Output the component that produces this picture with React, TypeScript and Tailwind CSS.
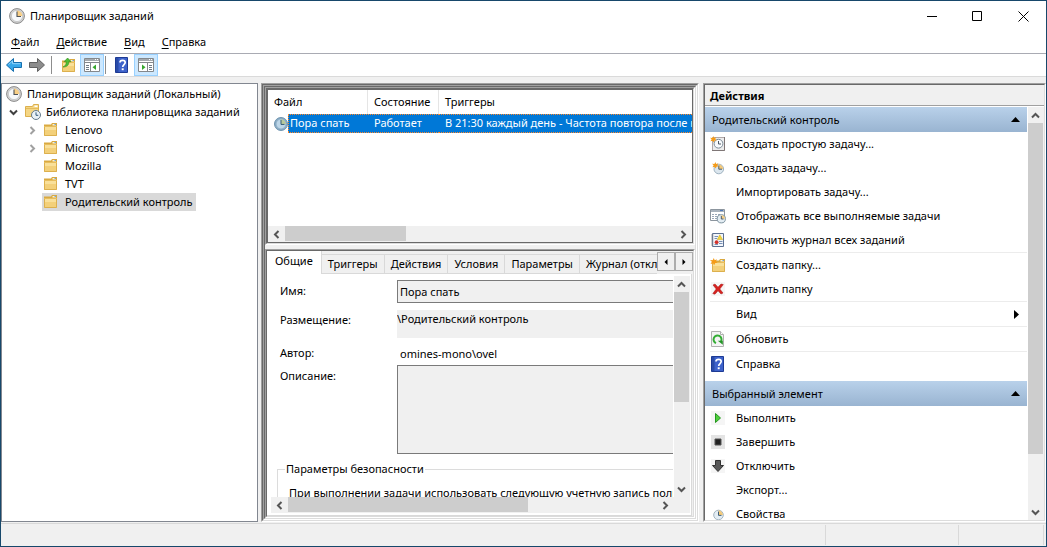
import { useState } from 'react';
import type { ReactNode } from 'react';
import clsx from 'clsx';

/* ---------- icons ---------- */

function ClockIcon({ size = 16, tone = 'gold' }: { size?: number; tone?: 'gold' | 'blue' }) {
  const blue = tone === 'blue';
  return (
    <svg width={size} height={size} viewBox="0 0 16 16" className="shrink-0" aria-hidden="true">
      <circle cx="8" cy="8" r="7.4" fill={blue ? '#8fb0c8' : '#d4d4d4'} stroke={blue ? '#5d86a5' : '#8a8a8a'} strokeWidth="1" />
      <circle cx="8" cy="8" r="5.6" fill={blue ? '#bdd6e8' : '#f6f8fa'} stroke={blue ? '#7da0ba' : '#b5b5b5'} strokeWidth="0.6" />
      <path d="M8 8V2.6A5.4 5.4 0 0 1 13.4 8Z" fill={blue ? '#b9c99a' : '#f8cf86'} />
      <path d="M8 3.4V8.5H12" fill="none" stroke={blue ? '#2f5876' : '#4e5358'} strokeWidth="1.1" />
    </svg>
  );
}

function FolderShape() {
  return (
    <>
      <path d="M1 2.5H8L9 1H14V14H1Z" fill="#d9a941" />
      <path d="M9.5 2H13V3.5H9.5Z" fill="#fff3cf" />
      <path d="M11.5 2H13V3H11.5Z" fill="#6ea6da" />
      <path d="M1 4.5H14V14H1Z" fill="#f3d07a" />
      <path d="M1 5H14V8H1Z" fill="#f9e09a" />
      <path d="M1.5 5V13.5H13.5V5" fill="none" stroke="#dcb04e" />
    </>
  );
}

function FolderIcon() {
  return (
    <svg width="16" height="16" viewBox="0 0 16 16" className="shrink-0" aria-hidden="true">
      <FolderShape />
    </svg>
  );
}

function LibraryIcon() {
  return (
    <svg width="16" height="16" viewBox="0 0 16 16" className="shrink-0" aria-hidden="true">
      <path d="M0.5 2.5H7.5L8.5 0.5H13.5V12.5H0.5Z" fill="#f5d684" stroke="#dcb04e" />
      <path d="M9.5 1.5H12.5V3H9.5Z" fill="#fff" />
      <path d="M1 4.5H13" stroke="#e3bb5d" />
      <circle cx="11" cy="11" r="4.5" fill="#e9f1f7" stroke="#64798a" />
      <path d="M11 8.3V11.3H13.3" fill="none" stroke="#31587a" />
    </svg>
  );
}

function Spark() {
  return <path d="M4.5 0L5.5 2.6L8.2 1.6L7 4L9 6L6.2 6L4.8 8.6L3.6 6.2L0.6 7L2.2 4.4L0 2.4L3.2 2.6Z" fill="#f59b16" />;
}

function NewBasicTaskIcon() {
  return (
    <svg width="16" height="16" viewBox="0 0 16 16" aria-hidden="true">
      <path d="M2.5 1.5H14.5V14.5H2.5Z" fill="#ececec" stroke="#b0a8a8" />
      <path d="M14.5 1V14.5H2" fill="none" stroke="#7f7676" />
      <circle cx="8.5" cy="7.7" r="4.4" fill="#f8fafc" stroke="#7d8c98" />
      <path d="M8.5 5V8H11" fill="none" stroke="#4c5964" />
      <g transform="scale(0.75)">
        <Spark />
      </g>
    </svg>
  );
}

function NewTaskIcon() {
  return (
    <svg width="16" height="16" viewBox="0 0 16 16" aria-hidden="true">
      <circle cx="8.8" cy="9" r="4.8" fill="#dbe6ee" stroke="#9fb2c0" />
      <path d="M8.8 9V4.6A4.4 4.4 0 0 1 13.2 9Z" fill="#f4c979" />
      <path d="M8.8 5.5V9.2H12" fill="none" stroke="#4a5b68" />
      <g transform="translate(2 2) scale(0.75)">
        <Spark />
      </g>
    </svg>
  );
}

function RunningTasksIcon() {
  return (
    <svg width="16" height="16" viewBox="0 0 16 16" aria-hidden="true">
      <path d="M0.5 1.5H14.5V12.5H0.5Z" fill="#fff" stroke="#8c959e" />
      <path d="M1 3H14" stroke="#a9b3bd" strokeWidth="2" />
      <path d="M10 2.5H13" stroke="#4f78b8" />
      <path d="M2 6.5H4M5 6.5H7M8 6.5H10M2 8.5H4M5 8.5H7M2 10.5H4M5 10.5H7" stroke="#9aa7b7" />
      <circle cx="11.3" cy="10.8" r="4.1" fill="#e4edf3" stroke="#7d929f" />
      <path d="M11.3 10.8V7.2A3.6 3.6 0 0 1 14.9 10.8Z" fill="#f4cb81" />
      <path d="M11.3 8V11H13.5" fill="none" stroke="#4a5b68" />
    </svg>
  );
}

function JournalIcon() {
  return (
    <svg width="16" height="16" viewBox="0 0 16 16" aria-hidden="true">
      <path d="M2.5 1.5H13.5V14.5H2.5Z" fill="#f3f6fb" stroke="#5d7192" />
      <path d="M4.5 4.5H8M4.5 6.5H7M9 9.5H12.5M9 11.5H12.5M4.5 12.5H8" stroke="#7890b5" />
      <path d="M9.8 2.8L12.6 7.6H7.2Z" fill="#f4d53a" stroke="#c9a71c" strokeWidth="0.5" />
      <circle cx="6.6" cy="10.2" r="1.9" fill="#d2312b" />
      <path d="M1 3H3.6M1 5H3.6M1 7H3.6M1 9H3.6M1 11H3.6M1 13H3.6" stroke="#8a8a8a" strokeWidth="0.8" />
    </svg>
  );
}

function NewFolderIcon() {
  return (
    <svg width="16" height="16" viewBox="0 0 16 16" aria-hidden="true">
      <g transform="translate(1 1)">
        <FolderShape />
      </g>
      <g transform="translate(0 1) scale(0.85)">
        <Spark />
      </g>
    </svg>
  );
}

function DeleteIcon() {
  return (
    <svg width="16" height="16" viewBox="0 0 16 16" aria-hidden="true">
      <path d="M1 1H15V15H1Z" fill="#f6f6f6" />
      <path d="M3 4L5 3L8 6.2L11 3L13.3 3.6L9.8 8L13 12L11 13L8 9.8L5 13.2L2.8 12.6L6.2 8Z" fill="#d7221f" stroke="#a31515" strokeWidth="0.5" />
    </svg>
  );
}

function RefreshIcon() {
  return (
    <svg width="16" height="16" viewBox="0 0 16 16" aria-hidden="true">
      <path d="M1.5 0.5H10.5L13.5 3.5V15.5H1.5Z" fill="#f4f4f4" stroke="#b0b0b0" />
      <path d="M10.5 0.5V3.5H13.5" fill="#fff" stroke="#b0b0b0" />
      <path d="M6 12.2A4 4 0 1 1 11 10.5" fill="none" stroke="#34ad35" strokeWidth="2" />
      <path d="M7.8 9.8H12.8V13.8Z" fill="#249426" />
    </svg>
  );
}

function HelpIcon() {
  return (
    <svg width="16" height="16" viewBox="0 0 16 16" className="shrink-0" aria-hidden="true">
      <path d="M1.5 0.5H13.5V15.5H1.5Z" fill="#3d62cb" stroke="#1d3a94" />
      <path d="M2 1H4.5V15H2Z" fill="#294ba8" />
      <path d="M6 5.6C6 2.6 11.2 2.6 11.2 5.6C11.2 7.6 8.7 7.6 8.7 10" fill="none" stroke="#fff" strokeWidth="1.7" />
      <path d="M7.7 11.3H9.7V13.2H7.7Z" fill="#fff" />
    </svg>
  );
}

function RunIcon() {
  return (
    <svg width="16" height="16" viewBox="0 0 16 16" aria-hidden="true">
      <path d="M1 1H15V15H1Z" fill="#f5f5f5" />
      <path d="M5.5 3.5L10.5 8L5.5 12.5Z" fill="#4fcf3c" stroke="#25961f" />
    </svg>
  );
}

function StopIcon() {
  return (
    <svg width="16" height="16" viewBox="0 0 16 16" aria-hidden="true">
      <path d="M1 1H15V15H1Z" fill="#e4e4e4" />
      <path d="M5 5H11V11H5Z" fill="#222" stroke="#555" />
    </svg>
  );
}

function DisableIcon() {
  return (
    <svg width="16" height="16" viewBox="0 0 16 16" aria-hidden="true">
      <path d="M1 1H15V15H1Z" fill="#f5f5f5" />
      <path d="M5.5 2.5H10.5V7.5H13.5L8 13.5L2.5 7.5H5.5Z" fill="#585858" stroke="#333" />
    </svg>
  );
}

function PropertiesIcon() {
  return (
    <svg width="16" height="16" viewBox="0 0 16 16" aria-hidden="true">
      <circle cx="8.5" cy="9" r="4.8" fill="#e3edf4" stroke="#a3b4c0" />
      <path d="M8.5 9V4.6A4.4 4.4 0 0 1 12.9 9Z" fill="#f5cb7a" />
      <path d="M8.5 5.6V9.4H11.5" fill="none" stroke="#3f5e78" />
    </svg>
  );
}

function ToolArrow({ forward }: { forward?: boolean }) {
  return (
    <svg width="16" height="16" viewBox="0 0 16 16" aria-hidden="true">
      {forward ? (
        <path d="M0.5 5.5H8.5V1.5L15.5 8L8.5 14.5V10.5H0.5Z" fill="#8c8c8c" stroke="#606060" />
      ) : (
        <>
          <path d="M15.5 5.5H7.5V1.5L0.5 8L7.5 14.5V10.5H15.5Z" fill="#35a7ea" stroke="#176fae" />
          <path d="M14.5 6.7H6.5V4L2.5 7.6" fill="none" stroke="#8fd4fb" />
        </>
      )}
    </svg>
  );
}

function UpFolderIcon() {
  return (
    <svg width="16" height="16" viewBox="0 0 16 16" aria-hidden="true">
      <g transform="translate(1 1)">
        <FolderShape />
      </g>
      <path d="M3 10C5.6 9 6.4 7 6.2 4.6H4.2L7.6 1L11 4.6H8.8C9 7.8 7.4 10 3 10Z" fill="#4fbf35" stroke="#2b8d1d" strokeWidth="0.6" />
    </svg>
  );
}

function PaneIcon({ right }: { right?: boolean }) {
  return (
    <svg width="16" height="14" viewBox="0 0 16 14" aria-hidden="true">
      <path d="M0.5 0.5H15.5V13.5H0.5Z" fill="#fff" stroke="#84888c" />
      <path d="M1 2H15" stroke="#a4a9ae" strokeWidth="2" />
      <path d="M11 1.5H12M13 1.5H14" stroke="#fff" />
      <path d="M1 4.5H15" stroke="#84888c" />
      {right ? (
        <>
          <path d="M9.5 4.5V13.5" stroke="#84888c" />
          <path d="M11 7.5H14M11 9.5H14M11 11.5H14" stroke="#6e7a86" />
          <path d="M4 6.5L7.5 9.2L4 12Z" fill="#37a72e" />
        </>
      ) : (
        <>
          <path d="M6.5 4.5V13.5" stroke="#84888c" />
          <path d="M2 7.5H5M2 9.5H5M2 11.5H5" stroke="#6e7a86" />
          <path d="M12 6.5L8.5 9.2L12 12Z" fill="#37a72e" />
        </>
      )}
    </svg>
  );
}

const chevrons = {
  up: 'M1 6.5L4.5 3L8 6.5',
  down: 'M1 2.5L4.5 6L8 2.5',
  left: 'M6.5 1L3 4.5L6.5 8',
  right: 'M2.5 1L6 4.5L2.5 8',
};

function Chevron({ dir, color = '#555', width = 2 }: { dir: keyof typeof chevrons; color?: string; width?: number }) {
  return (
    <svg width="9" height="9" viewBox="0 0 9 9" aria-hidden="true">
      <path d={chevrons[dir]} fill="none" stroke={color} strokeWidth={width} />
    </svg>
  );
}

/* ---------- building blocks ---------- */

function Sunken({ className, children }: { className?: string; children: ReactNode }) {
  return (
    <div className={clsx('flex min-h-0 min-w-0 border border-t-[#a0a0a0] border-l-[#a0a0a0] border-r-white border-b-white', className)}>
      <div className="flex min-h-0 min-w-0 flex-1 flex-col border border-t-[#696969] border-l-[#696969] border-r-[#dcdcdc] border-b-[#dcdcdc]">
        {children}
      </div>
    </div>
  );
}

function HScroll({ thumb }: { thumb: string }) {
  return (
    <div className="flex h-4 shrink-0 bg-[#f0f0f0]">
      <button type="button" aria-label="Прокрутить влево" className="flex w-[17px] items-center justify-center">
        <Chevron dir="left" />
      </button>
      <div className="flex-1">
        <div className={clsx('h-[15px] bg-[#cdcdcd]', thumb)} />
      </div>
      <button type="button" aria-label="Прокрутить вправо" className="flex w-[17px] items-center justify-center">
        <Chevron dir="right" />
      </button>
    </div>
  );
}

function VScroll({ thumb }: { thumb: string }) {
  return (
    <div className="flex w-4 shrink-0 flex-col bg-[#f0f0f0]">
      <button type="button" aria-label="Прокрутить вверх" className="flex h-4 w-[15px] items-center justify-center">
        <Chevron dir="up" />
      </button>
      <div className="min-h-0 flex-1">
        <div className={clsx('w-[15px] bg-[#cdcdcd]', thumb)} />
      </div>
      <button type="button" aria-label="Прокрутить вниз" className="flex h-4 w-[15px] items-center justify-center">
        <Chevron dir="down" />
      </button>
    </div>
  );
}

/* ---------- window chrome ---------- */

function TitleBar() {
  return (
    <header className="flex h-[30px] shrink-0 items-center pl-2">
      <ClockIcon />
      <h1 className="ml-[5px] flex-1">Планировщик заданий</h1>
      <button type="button" aria-label="Свернуть" className="flex h-full w-[46px] items-center justify-center">
        <svg width="11" height="11" viewBox="0 0 11 11">
          <path d="M0 5.5H10" stroke="#000" />
        </svg>
      </button>
      <button type="button" aria-label="Развернуть" className="flex h-full w-[45px] items-center justify-center">
        <svg width="11" height="11" viewBox="0 0 11 11">
          <path d="M0.5 0.5H9.5V9.5H0.5Z" fill="none" stroke="#000" />
        </svg>
      </button>
      <button type="button" aria-label="Закрыть" className="flex h-full w-[46px] items-center justify-center">
        <svg width="11" height="11" viewBox="0 0 11 11">
          <path d="M0.5 0.5L10.5 10.5M10.5 0.5L0.5 10.5" stroke="#000" />
        </svg>
      </button>
    </header>
  );
}

const menus = ['Файл', 'Действие', 'Вид', 'Справка'];

function MenuBar() {
  return (
    <nav className="flex h-[22px] shrink-0 items-center gap-[17px] pl-[10px]">
      {menus.map((m) => (
        <button type="button" key={m}>
          <span className="underline underline-offset-2">{m[0]}</span>
          {m.slice(1)}
        </button>
      ))}
    </nav>
  );
}

function Toolbar() {
  return (
    <div className="flex h-6 shrink-0 items-center border-t border-b border-t-[#a9abb3] border-b-[#dadada] pl-[5px]">
      <button type="button" aria-label="Назад">
        <ToolArrow />
      </button>
      <button type="button" aria-label="Вперёд" className="ml-[7px]">
        <ToolArrow forward />
      </button>
      <span className="mr-2 ml-[6px] h-[18px] w-px bg-[#8d8d8d]" />
      <button type="button" aria-label="На уровень вверх">
        <UpFolderIcon />
      </button>
      <button
        type="button"
        aria-label="Дерево консоли"
        className="ml-1 flex h-[22px] w-6 items-center justify-center border border-[#99d1ff] bg-[#cce8ff]"
      >
        <PaneIcon />
      </button>
      <span className="mr-2 ml-[1px] h-[18px] w-px bg-[#8d8d8d]" />
      <button type="button" aria-label="Справка">
        <HelpIcon />
      </button>
      <button
        type="button"
        aria-label="Панель действий"
        className="ml-1 flex h-[22px] w-6 items-center justify-center border border-[#99d1ff] bg-[#cce8ff]"
      >
        <PaneIcon right />
      </button>
    </div>
  );
}

/* ---------- tree ---------- */

const folders = [
  { name: 'Lenovo', expandable: true },
  { name: 'Microsoft', expandable: true },
  { name: 'Mozilla' },
  { name: 'TVT' },
  { name: 'Родительский контроль' },
];

function TreePane() {
  const [selected, setSelected] = useState('Родительский контроль');

  return (
    <aside className="w-[257px] shrink-0 overflow-hidden border border-[#828790] bg-white pt-px whitespace-nowrap">
      <div className="flex h-[18px] items-center gap-[5px] pl-1">
        <ClockIcon />
        <span>Планировщик заданий (Локальный)</span>
      </div>
      <div className="flex h-[18px] items-center pl-[7px]">
        <Chevron dir="down" color="#404040" />
        <span className="ml-[7px] flex">
          <LibraryIcon />
        </span>
        <span className="ml-[5px]">Библиотека планировщика заданий</span>
      </div>
      {folders.map((f) => (
        <div key={f.name} className="flex h-[18px] items-center pl-[26px]">
          <span className="flex w-[14px] shrink-0">{f.expandable && <Chevron dir="right" color="#a0a0a0" />}</span>
          <button
            type="button"
            onClick={() => setSelected(f.name)}
            className={clsx('flex h-[18px] items-center gap-[6px] pr-1 pl-[1px]', selected === f.name && 'bg-[#d9d9d9]')}
          >
            <FolderIcon />
            {f.name}
          </button>
        </div>
      ))}
    </aside>
  );
}

/* ---------- task list and details ---------- */

// selected row cell: dotted focus line above and below the blue fill
function SelectedCell({ first, children }: { first?: boolean; children: ReactNode }) {
  return (
    <div className="h-[19px] min-w-0 flex-1 bg-[repeating-linear-gradient(90deg,#ff8728_0_1px,#0078d7_1px_2px)] py-px">
      <div className={clsx('h-[17px] overflow-hidden bg-[#0078d7]', first ? 'border-l border-dotted border-[#ff8728] pl-px' : 'pl-[6px]')}>
        {children}
      </div>
    </div>
  );
}

function TaskList() {
  return (
    <Sunken className="h-[158px] shrink-0">
      <div className="flex min-h-0 flex-1 flex-col border border-[#696969] bg-white">
        <div className="min-h-0 flex-1 overflow-hidden">
          <table className="w-full table-fixed border-separate border-spacing-0 text-left whitespace-nowrap">
            <thead>
              <tr className="h-6">
                <th className="w-[100px] border-r border-[#e5e5e5] px-0 pl-[6px] font-normal">Файл</th>
                <th className="w-[71px] border-r border-[#e5e5e5] px-0 pl-[6px] font-normal">Состояние</th>
                <th className="px-0 pl-[6px] font-normal">Триггеры</th>
              </tr>
            </thead>
            <tbody>
              <tr className="text-white">
                <td className="p-0">
                  <div className="flex items-center pl-[6px]">
                    <ClockIcon size={14} tone="blue" />
                    <SelectedCell first>Пора спать</SelectedCell>
                  </div>
                </td>
                <td className="p-0">
                  <SelectedCell>Работает</SelectedCell>
                </td>
                <td className="p-0">
                  <SelectedCell>В 21:30 каждый день - Частота повтора после начала: 00:05:00</SelectedCell>
                </td>
              </tr>
            </tbody>
          </table>
        </div>
        <HScroll thumb="w-[31%]" />
      </div>
    </Sunken>
  );
}

const tabs = ['Общие', 'Триггеры', 'Действия', 'Условия', 'Параметры', 'Журнал (отключен)'];

function TabStrip() {
  const [active, setActive] = useState('Общие');

  return (
    <div className="flex h-[23px] shrink-0 bg-[#f0f0f0]">
      <div className="flex min-w-0 flex-1 items-end overflow-hidden whitespace-nowrap" role="tablist">
        {tabs.map((t) => (
          <button
            type="button"
            role="tab"
            aria-selected={active === t}
            key={t}
            onClick={() => setActive(t)}
            className={clsx(
              'shrink-0 border-r border-[#d9d9d9]',
              active === t ? 'h-[23px] bg-white px-2 pb-1' : 'h-5 border-t border-b px-[6px]'
            )}
          >
            {t}
          </button>
        ))}
      </div>
      <div className="flex h-5 pt-px">
        <button type="button" aria-label="Предыдущие вкладки" className="flex w-[18px] items-center justify-center border border-[#adadad]">
          <svg width="4" height="6" viewBox="0 0 4 6">
            <path d="M3.5 0V6L0.5 3Z" />
          </svg>
        </button>
        <button type="button" aria-label="Следующие вкладки" className="flex w-[18px] items-center justify-center border border-[#adadad]">
          <svg width="4" height="6" viewBox="0 0 4 6">
            <path d="M0.5 0V6L3.5 3Z" />
          </svg>
        </button>
      </div>
    </div>
  );
}

function GeneralForm() {
  return (
    <form className="min-h-0 min-w-0 flex-1 overflow-hidden pt-[6px] pl-[10px] whitespace-nowrap">
      <div className="grid grid-cols-[117px_1fr] pl-[3px]">
        <label htmlFor="name" className="leading-[22px]">Имя:</label>
        <input id="name" readOnly value="Пора спать" className="mb-[7px] h-[23px] min-w-0 border border-r-0 border-[#7a7a7a] bg-[#f0f0f0] px-[2px]" />
        <label htmlFor="location" className="leading-5">Размещение:</label>
        <input id="location" readOnly value="\Родительский контроль" className="mb-[6px] h-7 min-w-0 bg-[#f0f0f0] pb-3" />
        <label htmlFor="author" className="leading-[18px]">Автор:</label>
        <input id="author" readOnly value="omines-mono\ovel" className="mb-[3px] h-[18px] min-w-0 px-[3px]" />
        <label htmlFor="description" className="leading-[22px]">Описание:</label>
        <textarea id="description" readOnly className="h-[89px] min-w-0 resize-none border border-r-0 border-[#7a7a7a] bg-[#f0f0f0]" />
      </div>
      <fieldset className="mt-[7px] h-20 border border-r-0 border-[#dcdcdc] pl-[11px]">
        <legend className="-ml-1 px-[1px]">Параметры безопасности</legend>
        <p className="mt-2">При выполнении задачи использовать следующую учетную запись пользователя:</p>
      </fieldset>
    </form>
  );
}

function CenterPane() {
  return (
    <Sunken className="flex-1">
      <Sunken className="flex-1">
        <TaskList />
        <div className="h-1 shrink-0" />
        <Sunken className="flex-1">
          <TabStrip />
          <div className="mr-px flex min-h-0 flex-1 flex-col border-r border-b border-[#d9d9d9] bg-white pr-px pb-[2px]">
            <div className="flex min-h-0 flex-1">
              <GeneralForm />
              <div className="flex pt-[2px] pl-px">
                <VScroll thumb="h-[58%]" />
              </div>
            </div>
            <div className="flex pl-1">
              <div className="min-w-0 flex-1">
                <HScroll thumb="w-[65%]" />
              </div>
              <div className="w-4 shrink-0 bg-[#f0f0f0]" />
            </div>
          </div>
        </Sunken>
      </Sunken>
    </Sunken>
  );
}

/* ---------- actions ---------- */

type Action = { label: string; icon?: ReactNode; submenu?: boolean; divider?: boolean };

const folderActions: Action[] = [
  { label: 'Создать простую задачу...', icon: <NewBasicTaskIcon /> },
  { label: 'Создать задачу...', icon: <NewTaskIcon /> },
  { label: 'Импортировать задачу...' },
  { label: 'Отображать все выполняемые задачи', icon: <RunningTasksIcon /> },
  { label: 'Включить журнал всех заданий', icon: <JournalIcon />, divider: true },
  { label: 'Создать папку...', icon: <NewFolderIcon /> },
  { label: 'Удалить папку', icon: <DeleteIcon />, divider: true },
  { label: 'Вид', submenu: true, divider: true },
  { label: 'Обновить', icon: <RefreshIcon />, divider: true },
  { label: 'Справка', icon: <HelpIcon /> },
];

const itemActions: Action[] = [
  { label: 'Выполнить', icon: <RunIcon /> },
  { label: 'Завершить', icon: <StopIcon /> },
  { label: 'Отключить', icon: <DisableIcon /> },
  { label: 'Экспорт...' },
  { label: 'Свойства', icon: <PropertiesIcon /> },
];

function ActionGroup({ title, actions }: { title: string; actions: Action[] }) {
  return (
    <section>
      <h3 className="flex h-[25px] items-center justify-between bg-linear-to-b from-[#b9d1ea] to-[#99b4d1] pr-[7px] pl-[7px]">
        {title}
        <svg width="9" height="5" viewBox="0 0 9 5" aria-hidden="true">
          <path d="M4.5 0L9 5H0Z" />
        </svg>
      </h3>
      <ul>
        {actions.map((a) => (
          <li key={a.label} className="pl-[5px]">
            <button type="button" className="flex h-6 w-full items-center pr-2 text-left">
              <span className="flex w-[26px] shrink-0">{a.icon}</span>
              <span className="flex-1">{a.label}</span>
              {a.submenu && (
                <svg width="5" height="9" viewBox="0 0 5 9" aria-hidden="true">
                  <path d="M0 0L5 4.5L0 9Z" />
                </svg>
              )}
            </button>
            {a.divider && <div className="h-px bg-[#ececec]" />}
          </li>
        ))}
      </ul>
    </section>
  );
}

function ActionsPane() {
  return (
    <Sunken className="ml-px w-[343px] shrink-0">
      <h2 className="h-[21px] shrink-0 border-b border-[#a0a0a0] pl-[5px] leading-[22px] font-bold">Действия</h2>
      <div className="flex min-h-0 flex-1 bg-white pt-px">
        <div className="mr-px flex min-w-0 flex-1 flex-col gap-[5px] overflow-hidden whitespace-nowrap">
          <ActionGroup title="Родительский контроль" actions={folderActions} />
          <ActionGroup title="Выбранный элемент" actions={itemActions} />
        </div>
        <VScroll thumb="h-[87%]" />
      </div>
    </Sunken>
  );
}

export default function App() {
  return (
    <div className="flex h-screen flex-col overflow-hidden border border-[#17486b] bg-white font-['Noto_Sans',sans-serif] text-[11px] leading-4 text-black">
      <TitleBar />
      <MenuBar />
      <Toolbar />
      <main className="flex min-h-0 flex-1 gap-[3px] bg-[#f0f0f0] pt-[6px] pb-px">
        <TreePane />
        <CenterPane />
        <ActionsPane />
      </main>
      <footer className="flex h-[23px] shrink-0 justify-end border-t border-[#d9d9d9] bg-[#f0f0f0] py-px">
        <span className="w-[133px] border-l border-[#d9d9d9]" />
        <span className="mr-[2px] w-[86px] border-x border-[#d9d9d9]" />
      </footer>
    </div>
  );
}
